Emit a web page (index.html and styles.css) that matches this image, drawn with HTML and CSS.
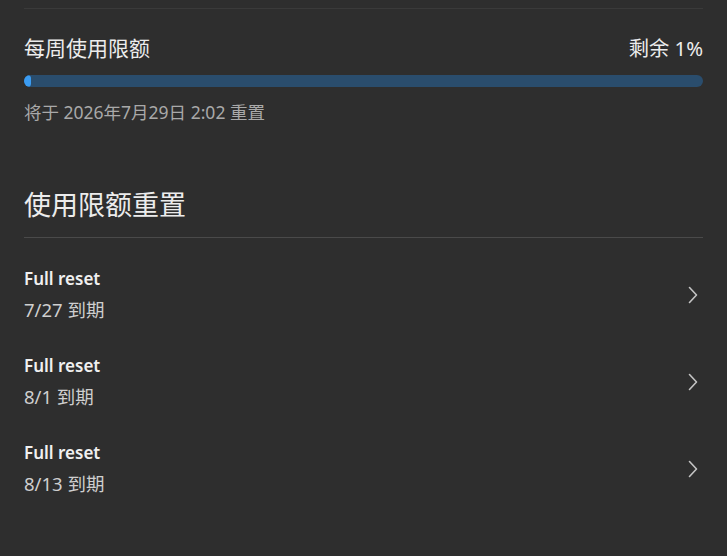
FILE: index.html
```html
<!DOCTYPE html>
<html lang="zh-CN">
<head>
<meta charset="utf-8">
<link rel="stylesheet" href="styles.css">
</head>
<body>
<div class="page">
  <section class="weekly">
    <div class="row">
      <span class="label">每周使用限额</span>
      <span class="remain">剩余 1%</span>
    </div>
    <div class="bar"><div class="fill" style="width:1%"></div></div>
    <div class="reset-time">将于 2026年7月29日 2:02 重置</div>
  </section>
  <h2 class="section-title">使用限额重置</h2>
  <ul class="list">
    <li class="item">
      <div class="text"><div class="title">Full reset</div><div class="sub">7/27 到期</div></div>
      <svg class="chev" width="10" height="18" viewBox="0 0 10 18"><path d="M1.5 1.5 L8.5 9 L1.5 16.5" fill="none" stroke="#c4c4c4" stroke-width="1.6" stroke-linecap="round" stroke-linejoin="round"/></svg>
    </li>
    <li class="item">
      <div class="text"><div class="title">Full reset</div><div class="sub">8/1 到期</div></div>
      <svg class="chev" width="10" height="18" viewBox="0 0 10 18"><path d="M1.5 1.5 L8.5 9 L1.5 16.5" fill="none" stroke="#c4c4c4" stroke-width="1.6" stroke-linecap="round" stroke-linejoin="round"/></svg>
    </li>
    <li class="item">
      <div class="text"><div class="title">Full reset</div><div class="sub">8/13 到期</div></div>
      <svg class="chev" width="10" height="18" viewBox="0 0 10 18"><path d="M1.5 1.5 L8.5 9 L1.5 16.5" fill="none" stroke="#c4c4c4" stroke-width="1.6" stroke-linecap="round" stroke-linejoin="round"/></svg>
    </li>
  </ul>
</div>
</body>
</html>
```
FILE: styles.css
```css
html, body {
  margin: 0;
  padding: 0;
  background: #2e2e2e;
}
body {
  font-family: "Noto Sans", "Noto Sans CJK SC", sans-serif;
  color: #e6e6e6;
}
.page {
  padding: 8px 24px 0 24px;
}
.weekly {
  border-top: 1px solid #3a3a3a;
  padding-top: 27px;
}
.row {
  display: flex;
  justify-content: space-between;
  align-items: center;
  height: 24px;
}
.label {
  font-size: 21px;
  line-height: 24px;
  color: #ececec;
}
.remain {
  font-size: 20.3px;
  line-height: 24px;
  color: #ececec;
}
.bar {
  margin-top: 15px;
  height: 12px;
  border-radius: 6px;
  background: #2a4d6d;
  overflow: hidden;
}
.fill {
  height: 100%;
  min-width: 7px;
  border-radius: 6px;
  background: #3b9cf2;
}
.reset-time {
  margin-top: 15px;
  font-size: 17.5px;
  line-height: 20px;
  color: #a9a9a9;
}
.section-title {
  margin: 67px 0 0 0;
  font-size: 27px;
  font-weight: normal;
  line-height: 32px;
  color: #ececec;
  padding-bottom: 16px;
  border-bottom: 1px solid #4a4a4a;
}
.list {
  list-style: none;
  margin: 0;
  padding: 13px 0 0 0;
}
.item {
  display: flex;
  align-items: center;
  justify-content: space-between;
  padding: 15px 0;
}
.text {
  display: flex;
  flex-direction: column;
  gap: 5px;
}
.title {
  font-size: 17px;
  font-weight: 600;
  line-height: 26px;
  color: #f0f0f0;
}
.sub {
  font-size: 18.5px;
  line-height: 26px;
  color: #cfcfcf;
}
.chev {
  margin-right: 5px;
  display: block;
}
```
